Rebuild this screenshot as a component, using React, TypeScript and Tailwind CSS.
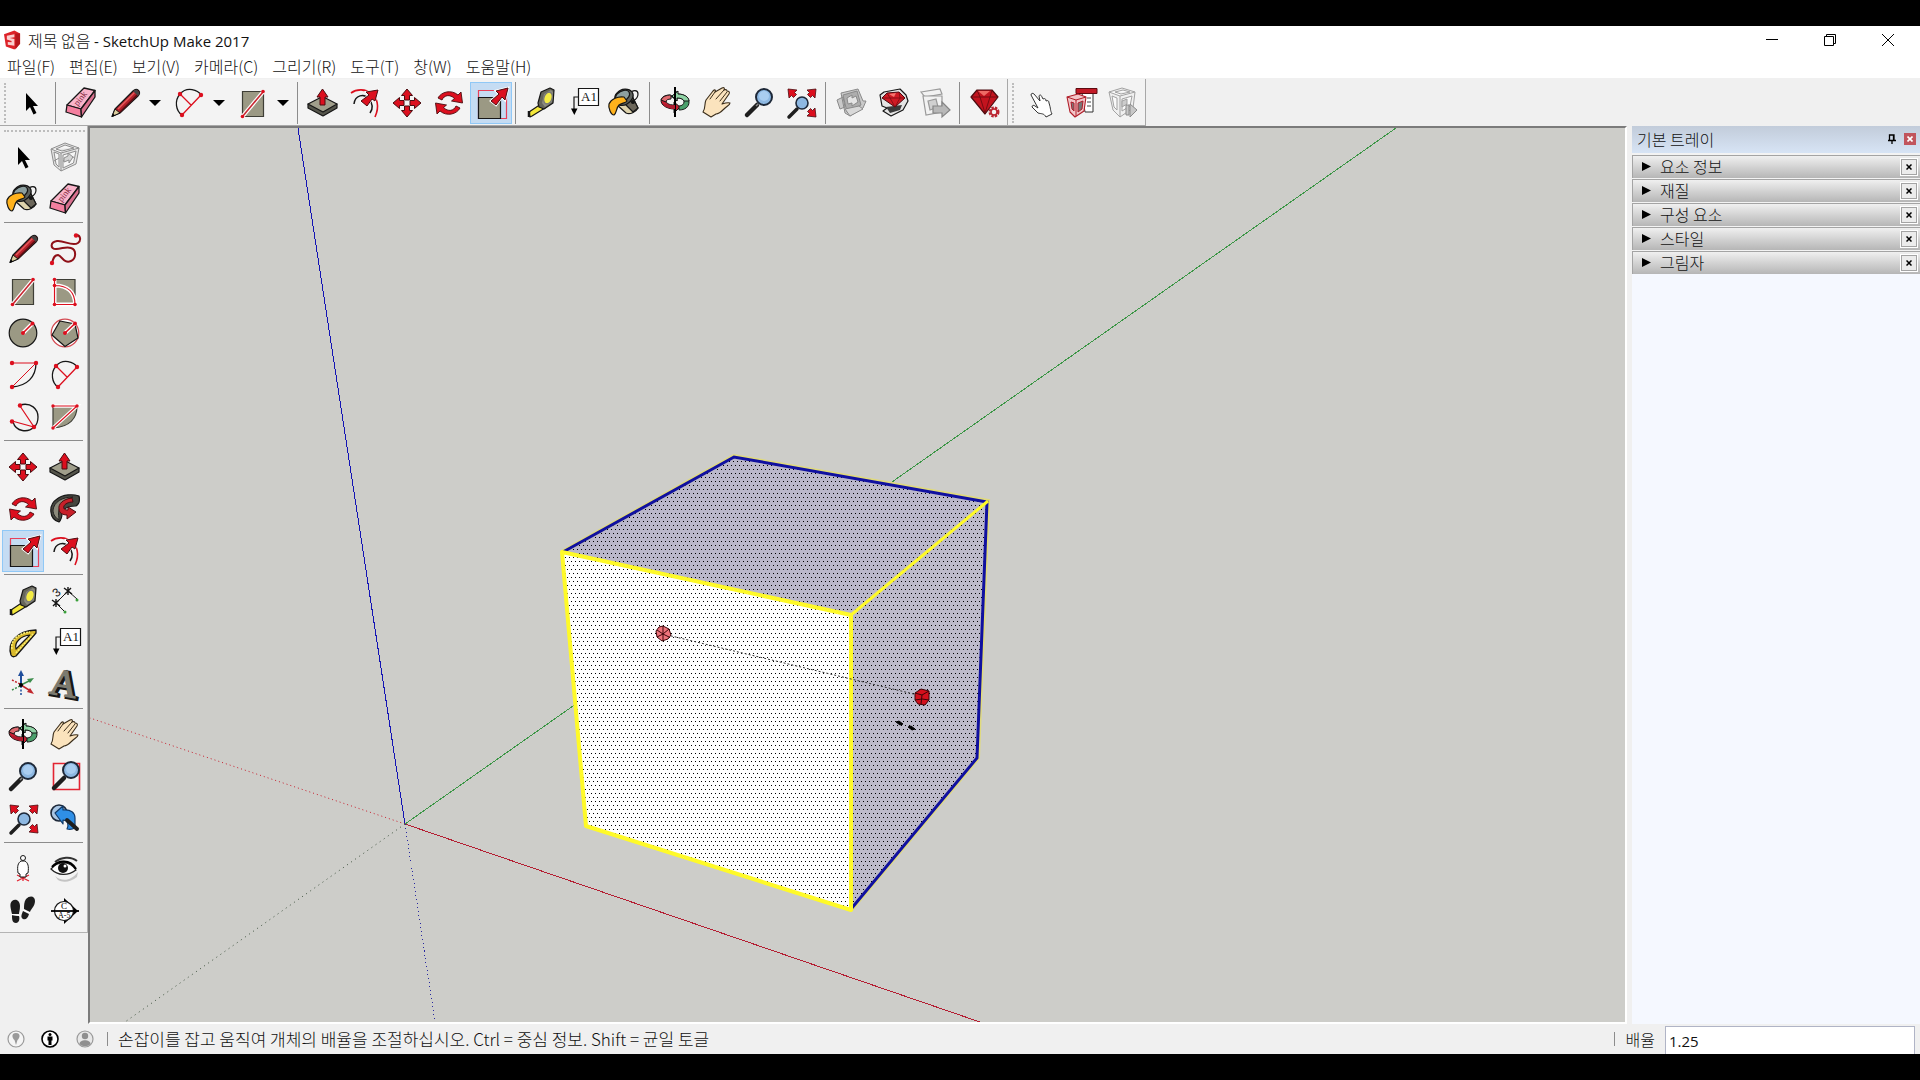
import type { ReactNode } from "react";

const RED = "#dc0f1e";
const OLIVE = "#9b9984";
const INK = "#161616";

// All tool icons share a 32x32 box
const icons: Record<string, ReactNode> = {
  select: <path d="M11 6v18l4-4 3.500 7.500 3-1.500-3.500-7h5z" fill="#000" />,
  component: (
    <g fill="none" stroke="#8e8e8e" strokeWidth="1" strokeLinejoin="round">
      <path d="M2 8 16 2l14 5-3 16-15 7L5 24z" fill="#e4e4e4" />
      <path d="M2 8l10 4 18-5M12 12v18M5 11l5 2v13l-3-3zM14 14l13-4-2.500 12L14 27zM7 8l9-4 9 3-12 3z" fill="#f6f6f6" />
      <path d="M5 20l5-3M14 20l11-4" />
      <path d="M15 17l4-2v-3l5 4-4 6v-3l-5 2z" fill="#d4d4d4" />
    </g>
  ),
  bucket: (
    <g stroke={INK} strokeWidth="1.200" strokeLinejoin="round">
      <path d="M20 7c4-5 9-4 9 0s-3 6-5 7" fill="none" />
      <path d="M7 9l16 0 6 12c-2 4-8 7-12 5L7 17z" fill="#ddd2ac" />
      <path d="M15 16l9-5 5 10-5 4z" fill="#6c675b" />
      <path d="M8 6c4-5 12-5 15-1s0 9-5 12S7 18 6 14s0-6 2-8z" fill="#5e625e" />
      <path d="M8 7c4-4 10-5 12-2s-1 7-5 9-7 1-8-1 0-5 1-6z" fill="#8da0a0" />
      <path d="M15 10C9 9 2 12 0 17c-1 4 2 11 5 11 3-2 2-7 5-10 3-2 7-2 8-4z" fill="#ffb21c" />
      <circle cx="24" cy="15" r="1.500" fill="#161616" />
    </g>
  ),
  eraser: (
    <g stroke={INK} strokeWidth="1.300" strokeLinejoin="round">
      <path d="M19 1 2 18l14 4L30 3.500z" fill="#f9b4ca" />
      <path d="M2 18l14 4 .5 8L1 25z" fill="#f47f9f" />
      <path d="M16 22 30 3.500V10L16.500 30z" fill="#d9718f" />
      <text
        x="10"
        y="18"
        fontSize="9"
        fontFamily="Liberation Serif, serif"
        fill="#7c1c38"
        stroke="none"
        transform="rotate(-52 13 16)"
      >
        pink
      </text>
    </g>
  ),
  pencil: (
    <g strokeLinejoin="round">
      <path d="M3 29.500 6 22l18-18c2-2 4-2 5.500-.5S31 7 29 9L11 26z" fill="#b3202a" stroke={INK} strokeWidth="1.200" />
      <path d="M9 22 25.500 5.500" stroke="#e55a5a" strokeWidth="1.500" />
      <path d="M11 25 28 8" stroke="#5e0d12" strokeWidth="1.500" />
      <path d="M3 29.500 6 22l5 4z" fill="#dccd9e" stroke={INK} />
      <path d="m24 4 5 5 1.500-3-3-3.500z" fill="#444" />
      <path d="m3 29.500 1-3 2 2z" fill="#000" />
    </g>
  ),
  freehand: (
    <g>
      <path
        d="M28 2c4 1 4 6 1 8-6 4-14-3-21-2-7 1-7 8-1 8 6 0 10-3 15-1 6 2 5 11 0 13-7 3-9-5-13-6-4 0-5 4-6 8"
        fill="none"
        stroke="#8f1018"
        strokeWidth="2"
      />
      <circle cx="27" cy="2.500" r="2.200" fill={RED} />
      <circle cx="3" cy="30" r="2.200" fill={RED} />
    </g>
  ),
  rectangle: (
    <g>
      <path d="M5.500 4.500h21v25h-21z" fill={OLIVE} stroke="#3e3e36" strokeWidth="1.200" />
      <path d="M5.500 29.500 26 5" stroke="#fff" strokeWidth="4" />
      <path d="M5.500 29.500 26 5" stroke="#c82832" strokeWidth="1.600" />
      <circle cx="5.500" cy="29.500" r="1.800" fill={RED} />
      <circle cx="26" cy="4.500" r="1.800" fill={RED} />
    </g>
  ),
  rotatedRectangle: (
    <g>
      <path d="M6.500 4.500h19.500v25H5.500z" fill={OLIVE} stroke="#3e3e36" strokeWidth="1.200" />
      <path d="M5.500 4.500v25h20.500c0-12-7-19-20.500-19" fill="none" stroke="#fff" strokeWidth="4" />
      <path d="M5.500 4.500v25h20.500c0-12-7-19-20.500-19" fill="none" stroke={RED} strokeWidth="1.200" />
      <g fill={RED}>
        <circle cx="5.500" cy="4.500" r="1.800" />
        <circle cx="5.500" cy="10.500" r="1.800" />
        <circle cx="5.500" cy="29.500" r="1.800" />
        <circle cx="26" cy="29.500" r="1.800" />
      </g>
    </g>
  ),
  circle: (
    <g>
      <circle cx="16" cy="16" r="13.800" fill={OLIVE} stroke={INK} strokeWidth="1.200" />
      <path d="m16 16 9.500-9.500" stroke="#fff" strokeWidth="4" />
      <path d="m16 16 9.500-9.500" stroke={RED} strokeWidth="1.600" />
      <circle cx="16" cy="16" r="2" fill={RED} />
      <circle cx="25.500" cy="6.500" r="2" fill={RED} />
    </g>
  ),
  polygon: (
    <g>
      <circle cx="16" cy="16" r="13.800" fill="#fff" stroke="#d44a52" strokeWidth="1.200" />
      <path d="M11 4 26 7l3 14-13 8.500L3 18z" fill={OLIVE} stroke={INK} strokeWidth="1.200" />
      <path d="m16 16 10-9.500" stroke="#fff" strokeWidth="4" />
      <path d="m16 16 10-9.500" stroke={RED} strokeWidth="1.600" />
      <circle cx="16" cy="16" r="2" fill={RED} />
      <circle cx="26" cy="6.500" r="2" fill={RED} />
    </g>
  ),
  arc: (
    <g fill="none">
      <path d="M29 4C29 18 20 27 5 28" stroke={INK} strokeWidth="1.300" />
      <path d="M5 4h24L5 28" stroke={RED} strokeWidth="1" />
      <g fill={RED}>
        <circle cx="5" cy="4" r="2.200" />
        <circle cx="29" cy="4" r="2.200" />
        <circle cx="5" cy="28" r="2.200" />
      </g>
    </g>
  ),
  twoPointArc: (
    <g fill="none">
      <path d="M9 28C3 24 1 14 7 7c7-8 18-4 21 1" stroke={INK} strokeWidth="1.300" />
      <path d="M7 7l11 11M9 28 28 8" stroke={RED} strokeWidth="1.300" />
      <g fill={RED}>
        <circle cx="7" cy="7" r="2.200" />
        <circle cx="28" cy="8" r="2.200" />
        <circle cx="9" cy="28" r="2.200" />
      </g>
    </g>
  ),
  threePointArc: (
    <g fill="none">
      <path d="M13 4C24 1 31 8 31 16c0 7-4 10-4 10-6 6-18 5-21-5" stroke={INK} strokeWidth="1.300" />
      <path d="M13 5l14 21-22-6" stroke={RED} strokeWidth="1.200" />
      <g fill={RED}>
        <circle cx="13" cy="4.500" r="2.200" />
        <circle cx="27" cy="26" r="2.200" />
        <circle cx="5" cy="20.500" r="2.200" />
      </g>
    </g>
  ),
  pie: (
    <g>
      <path d="M4 5h24c0 12-7 21-24 22z" fill={OLIVE} stroke="#3e3e36" strokeWidth="1.200" />
      <path d="M4 5h24L4 27" fill="none" stroke="#fff" strokeWidth="3.500" />
      <path d="M4 5h24L4 27" fill="none" stroke={RED} strokeWidth="1.100" />
      <g fill={RED}>
        <circle cx="4" cy="5" r="1.700" />
        <circle cx="28" cy="5" r="1.700" />
        <circle cx="4" cy="27" r="1.700" />
      </g>
    </g>
  ),
  move: (
    <path
      d="M16 2l5.500 6.500h-3V13h-5V8.500h-3zM16 30l5.500-6.500h-3V19h-5v4.500h-3zM2 16l6.500-5.500v3H13v5H8.500v3zM30 16l-6.500-5.500v3H19v5h4.500v3z"
      fill={RED}
      stroke="#4a0c10"
      strokeWidth="1"
    />
  ),
  pushPull: (
    <g strokeLinejoin="round">
      <path d="M1 17v4l15 8 14-8v-4z" fill="#55554b" stroke={INK} strokeWidth="1.200" />
      <path d="M1 17 15.500 9.500 30 17l-14 8z" fill="#a09e8b" stroke={INK} strokeWidth="1.200" />
      <path d="m15.500 2 5.500 8h-3v8h-5v-8h-3z" fill={RED} stroke="#4a0c10" />
    </g>
  ),
  rotate: (
    <g fill={RED} stroke="#4a0c10" strokeWidth=".9" strokeLinejoin="round">
      <path d="M5 11C8 5 18 2 25 8l3-3 1.500 11-11-2 3-2.500C17 7 11 8 9 13z" />
      <path d="M27 21c-3 6-13 9-20 3l-3 3-1.500-11 11 2-3 2.500C15 25 21 24 23 19z" />
    </g>
  ),
  followMe: (
    <g strokeLinejoin="round">
      <path d="M10 29C0 26-1 12 8 6 14 1 24 1 30 3c1 4 0 8-3 10-4 0-13 1-14 7 0 4-1 7-3 9z" fill="#46463f" stroke={INK} strokeWidth="1.200" />
      <path d="M4 17c1-8 9-13 20-13-7 2-13 7-14 13-1 4 0 7 0 10-3-2-6-5-6-10z" fill="#8b8a7b" stroke="#222" />
      <path d="M23 5c-9 1-14 6-13 11 0 4 4 6 8 6v4l9-7-8-5v3c-3 0-5-1-4-4 1-2 4-4 9-4z" fill="#c8202a" stroke="#4a0c10" />
    </g>
  ),
  scale: (
    <g>
      <path d="M3.500 3.500h28v28h-28z" fill="none" stroke="#e8415a" strokeWidth="1.200" />
      <path d="M3.500 10.500h22v21h-22z" fill={OLIVE} stroke={INK} strokeWidth="1.200" />
      <path d="M16 14l8-7-3-3 12-3-3 12-3-3-6 8z" fill={RED} stroke="#fff" strokeWidth="2.500" />
      <path d="M16 14l8-7-3-3 12-3-3 12-3-3-6 8z" fill={RED} stroke="#4a0c10" strokeWidth="1" />
    </g>
  ),
  offset: (
    <g fill="none">
      <path d="M2 6C14-3 36 8 26 30" stroke={RED} strokeWidth="1.600" />
      <path d="M5 17c1-9 10-11 15-5 4 5 4 10 1 14" stroke={INK} strokeWidth="1.500" />
      <path d="M12 14l8-6-3-3 12-2-3 11-3-2-5 7z" fill={RED} stroke="#fff" strokeWidth="2" />
      <path d="M12 14l8-6-3-3 12-2-3 11-3-2-5 7z" fill={RED} stroke="#4a0c10" />
    </g>
  ),
  tape: (
    <g stroke={INK} strokeWidth="1.200" strokeLinejoin="round">
      <path d="M4 25 16 17l4 4L7 29l-2 1z" fill="#f4e83a" />
      <path d="M4 24v6" strokeWidth="2.500" />
      <path d="M13 16 16 5l9-4 4 2-1 13-9 6-5-2z" fill="#66665c" />
      <path d="M17 16l2-9 7-4 2 2-1 10-7 5z" fill="#8e8d80" stroke="none" />
      <ellipse cx="23" cy="11" rx="4" ry="6" fill="#f4ec44" stroke="#777" transform="rotate(20 23 11)" />
    </g>
  ),
  dimension: (
    <g stroke={INK} strokeWidth="1">
      <path d="M7 18 19 6M7 18l9 9M19 6l9 8" />
      <path d="m3 15 8 6M4 21l6-6M7 14v8M15 3l8 6M16 9l6-6M19 2v8" strokeWidth="1.400" />
      <circle cx="16" cy="27" r="1.500" fill="#3aa03a" stroke="none" />
      <circle cx="28" cy="15" r="1.500" fill="#3aa03a" stroke="none" />
      <text x="4" y="11" fontSize="12" fontFamily="Liberation Sans, sans-serif" fill={INK} stroke="none" transform="rotate(-40 8 7)">
        3
      </text>
    </g>
  ),
  protractor: (
    <g strokeLinejoin="round">
      <path d="M4 28C0 16 9 4 29 3v3L9 29c-2 1-4 1-5-1z" fill="#d9b92c" stroke={INK} strokeWidth="1.300" />
      <path d="M9 22C7 15 14 9 23 8z" fill="#f3f3f3" stroke={INK} strokeWidth="1.200" />
      <path d="M5 22C3 13 12 6 23 5M9 26 26 7" stroke="#f8ee77" strokeWidth="1.600" fill="none" strokeDasharray="2 1" />
    </g>
  ),
  text: (
    <g>
      <path d="M11.500 1.500h20v17h-20z" fill="#fff" stroke={INK} strokeWidth="1.200" />
      <text x="14" y="14" fontSize="13" fontFamily="Liberation Serif, serif" fill={INK}>
        A1
      </text>
      <path d="M11 10H7v13" fill="none" stroke={INK} strokeWidth="1.200" />
      <path d="M4 21.500h6.500L7.300 28z" fill="#000" />
    </g>
  ),
  axes: (
    <g fill="none" strokeWidth="1.500">
      <path d="M14 16V5" stroke="#1f4e9c" strokeWidth="2" />
      <path d="m14 1 3 6h-6z" fill="#1f4e9c" />
      <path d="m14 16 8-4" stroke="#3b8d4b" />
      <path d="m27 9-7 1 3 4z" fill="#3b8d4b" />
      <path d="m14 16 8 5" stroke="#c1272d" />
      <path d="m27 25-7-2 3-4z" fill="#c1272d" />
      <path d="M14 17v10" stroke="#1f4e9c" strokeDasharray="2 1.500" />
      <path d="m13 17-8 4" stroke="#3b8d4b" strokeDasharray="2 1.500" />
      <path d="m13 15-8-4" stroke="#c1272d" strokeDasharray="2 1.500" />
      <circle cx="14" cy="16" r="2" fill="#000" />
    </g>
  ),
  text3d: (
    <g fontFamily="Liberation Serif, serif" fontSize="38" transform="rotate(10 16 16)">
      <text x="3" y="28" fill="#3d3d37" stroke={INK} strokeWidth="3.500">
        A
      </text>
      <text x="1" y="27" fill="#7c7b70" stroke="#7c7b70" strokeWidth="1.200">
        A
      </text>
    </g>
  ),
  orbit: (
    <g strokeLinejoin="round" stroke={INK} strokeWidth="1">
      <path d="M11 8C2 8 0 14 4 18c3 3 8 4 11 4v4l6-6-6-5v3c-5 0-8-2-8-4s2-3 5-3z" fill="#c41f32" />
      <path d="M2 13c1-3 5-5 10-5v4c-3 0-5 1-5 3z" fill="#e06a70" />
      <path d="M18 4v3l-6 2 6 5v-3c5 0 7 2 7 4s-2 4-5 4v4c6 0 10-3 10-8s-5-8-12-8z" fill="#4ba06c" />
      <path d="M13 9l6-5v3c6 0 11 3 11 7h-5c-1-2-3-3-7-3v3z" fill="#8fd3a5" />
      <path d="M16 0v30" stroke="#000" strokeWidth="2" />
      <path d="M7 17c2 1 5 2 9 1v4c-5 0-9-2-12-4z" fill="#b01b2e" stroke="none" />
    </g>
  ),
  pan: (
    <g strokeLinejoin="round" strokeLinecap="round">
      <path
        d="M2 25c3-4 1-8 3-12l7-9c2-2 3-1 2 1l7-4c2-1 3 0 2 2 2-1 3 0 3 1 2 0 3 1 2 3l-7 10c3-1 6-2 8-1 0 2-3 3-6 6-3 3-5 5-8 5l-5 3z"
        fill="#fbe3bd"
        stroke="#3a2d1b"
        strokeWidth="1.100"
      />
      <path d="m14 5-5 7M23 3l-8 9M26 5l-7 9" stroke="#3a2d1b" strokeWidth="1" />
    </g>
  ),
  zoom: (
    <g>
      <path d="M4 28 14 18" stroke="#1e1e1e" strokeWidth="4.500" strokeLinecap="round" />
      <path d="m13 19 3-3" stroke="#888" strokeWidth="1.500" />
      <circle cx="21" cy="10" r="8" fill="#8db8e2" stroke="#1d2838" strokeWidth="2" />
      <circle cx="21" cy="9" r="5" fill="#a9cdf0" />
    </g>
  ),
  zoomWindow: (
    <g>
      <path d="M4.500 2.500h26v26h-26z" fill="none" stroke="#e32432" strokeWidth="1.600" />
      <path d="M5 27 15 17" stroke="#1e1e1e" strokeWidth="4.500" strokeLinecap="round" />
      <circle cx="22" cy="9" r="8" fill="#8db8e2" stroke="#1d2838" strokeWidth="2" />
      <circle cx="22" cy="8" r="5" fill="#a9cdf0" />
    </g>
  ),
  zoomExtents: (
    <g>
      <path d="m4 30 8-8" stroke="#1e1e1e" strokeWidth="3.500" strokeLinecap="round" />
      <circle cx="17" cy="16" r="6" fill="#8db8e2" stroke="#1d2838" strokeWidth="1.600" />
      <path
        d="M3 2l9 1-2.500 2.500 2 2-3 3-2-2L4 11zM31 2l-1 9-2.500-2.500-2 2-3-3 2-2L22 3zM31 30l-9-1 2.500-2.500-2-2 3-3 2 2L30 21z"
        fill={RED}
        stroke="#4a0c10"
        strokeWidth=".8"
      />
    </g>
  ),
  previous: (
    <g strokeLinejoin="round">
      <circle cx="10" cy="10" r="8" fill="#a9c6e4" stroke="#1d2838" strokeWidth="1.600" />
      <path d="M6 10 14 3v4c8-1 12 3 12 8v10c-2 1-4 2-8 1 2-4 1-9-4-9v4z" fill="#2f8fe6" stroke="#123a68" strokeWidth="1.200" />
      <path d="m18 17 10 9" stroke="#1e1e1e" strokeWidth="4" strokeLinecap="round" />
    </g>
  ),
  camera: (
    <g fill="none">
      <path d="m10 22 12 6M22 22l-12 6M16 20v8" stroke="#e32432" strokeWidth="1.300" />
      <path d="M14 8c-3 2-4 5-3 12l2 1v3h6v-3l2-1c1-7 0-10-3-12z" fill="#fff" stroke={INK} />
      <circle cx="16" cy="5" r="2.500" fill="#fff" stroke={INK} />
    </g>
  ),
  look: (
    <g fill="none">
      <path d="M6 9C12 4 22 3 28 8" stroke="#333" strokeWidth="2" />
      <path d="M6 23c7 6 16 5 23-4l-1 5c-6 5-14 6-19 3z" fill="#c4c4c4" />
      <path d="M2 16C9 8 20 7 27 17c-8 6-18 6-25-1z" fill="#fff" stroke="#222" strokeWidth="1.200" />
      <path d="M3 14C9 7 21 6 27 16" stroke="#000" strokeWidth="2.200" />
      <circle cx="14" cy="15" r="5" fill="#111" />
      <circle cx="16" cy="13" r="1.500" fill="#fff" />
    </g>
  ),
  walk: (
    <g fill="#1d1d1d">
      <path d="M5 6c4-3 8 0 8 5 0 4-1 6-1 8H5C4 14 2 9 5 6zM5 20l7 1c1 3 0 7-3 7-4 0-4-4-4-8zM19 4c4-4 9-3 9 2s-4 8-5 11l-6-3c0-4 0-7 2-10zM16 16l6 3c-1 4-3 6-6 5-3-2-1-5 0-8z" />
      <path d="m4 19.500 9 1M16 15l7 3" stroke="#fff" strokeWidth="1" />
    </g>
  ),
  section: (
    <g>
      <path d="M15 3l14 13-14 13z" fill="#000" />
      <circle cx="15" cy="16" r="9.500" fill="#fff" stroke={INK} strokeWidth="1.200" />
      <path d="M2 16h28" stroke="#000" strokeWidth="1.800" />
      <text x="12" y="14" fontSize="9" fontFamily="Liberation Serif, serif">
        C
      </text>
      <text x="9" y="23" fontSize="8" fontFamily="Liberation Serif, serif">
        A-5
      </text>
    </g>
  ),
  warehouse: (
    <g stroke="#8a8a8a" strokeWidth="1" strokeLinejoin="round" fill="#c9c9c9">
      <path d="M2 13l6-3 2 10-5 2zM6 6l17-4 5 12 3 0-3 7-13 8-5-3z" />
      <path d="M8 8l14-4 4 14-14 7z" fill="#adadad" />
      <path d="M12 11l5-3v3l4-2 2 6-6 4v-3l-4 1z" fill="#e4e4e4" />
      <path d="M10 22l14-3 4 3-13 7z" fill="#d8d8d8" />
    </g>
  ),
  gemWarehouse: (
    <g strokeLinejoin="round">
      <path d="M3 8l4-3 16-3 6 6 2 6-5 9-12 6-8-5 4-3-5-2z" fill="#e4e4e4" stroke={INK} strokeWidth="1.200" />
      <path d="M9 20l16-2-2 5-10 3z" fill="#3a3a3a" />
      <path d="M5 11l5-5 12-1 6 6-10 9z" fill="#cf1a24" stroke="#4a0c10" />
      <path d="M5 11h23M10 6l3 5 5 9 5-9-1-6" fill="none" stroke="#7c0b12" strokeWidth=".8" />
      <path d="m12 7 7-1-2 4z" fill="#f7766f" />
    </g>
  ),
  share: (
    <g stroke="#9a9a9a" strokeWidth="1.200" fill="#f2f2f2">
      <path d="M2 5 21 2l2 5-17 3z" />
      <path d="M4 9h19v16l-16 3z" />
      <path d="M9 14l8-2 2 8-8 3z" fill="#d0d0d0" />
      <path d="M14 19h9v-4l8 8-8 7v-4h-9z" fill="#b8b8b8" stroke="#858585" />
    </g>
  ),
  extension: (
    <g strokeLinejoin="round">
      <path d="M2 10 8 3h15l6 7-13 17z" fill="#c3131e" stroke="#4a0c10" strokeWidth="1.200" />
      <path d="M2 10h27M8 3l3 7 5 16 5-16 2-7" fill="none" stroke="#6d0a10" strokeWidth=".9" />
      <path d="m9 4 6 5 6-5z" fill="#ee6a64" />
      <circle cx="25" cy="25" r="4" fill="#f3f3f3" stroke="#bb2430" strokeWidth="3" strokeDasharray="2.200 1" />
      <circle cx="25" cy="25" r="3" fill="#f3f3f3" stroke="#bb2430" strokeWidth="1.500" />
    </g>
  ),
  point: (
    <path
      d="M7 8c0-2 2-2 3-1l6 7-1-5c1-2 2-1 3 1l1 2c2-1 3 0 3 2 2-1 3 0 3 2 2 6 1 7 3 11l-6 3c-2-4-5-3-8-4l-6-6c0-2 2-2 3-1l3 2z"
      fill="#fff"
      stroke="#333"
      strokeWidth="1"
      strokeLinejoin="round"
    />
  ),
  componentOptions: (
    <g strokeLinejoin="round">
      <path d="M16 6h11v19h-8z" fill="#fff" stroke="#333" />
      <path d="M10 1.500h21v5H10z" fill="#c21a26" stroke="#5d0b10" />
      <path d="M21 11h4M21 15h4M21 19h4" stroke="#444" />
      <path d="M1 10l11-3 8 3-2 14-9 6-5-5z" fill="#f2c5c8" stroke="#b01c28" strokeWidth="1.100" />
      <path d="M1 10l9 3 10-3M10 13v16" fill="none" stroke="#b01c28" />
      <path d="M5 15l3 1v8l-2-2zM12 16l5-2-1 8-4 3z" fill="#777" stroke="#b01c28" />
    </g>
  ),
  componentAttributes: (
    <g stroke="#a2a2a2" fill="#f0f0f0" strokeLinejoin="round">
      <path d="M1 5 14 1l13 4-2 16-13 9-7-7z" />
      <path d="M1 5l11 4 15-4M12 9v21M4 9l5 2v12l-3-3zM14 12l10-3-2 10-8 5zM7 5l8-2 7 2-9 2z" fill="#fafafa" />
      <path d="M14 14l5-2v5l-5 3z" fill="#ccc" />
      <path d="M18 18h3v10h-3zM22 17l7 6-7 7z" fill="#c8c8c8" stroke="#8a8a8a" />
    </g>
  ),
};

const Icon = ({ name }: { name: string }) => (
  <svg viewBox="0 0 32 32" className="size-8 shrink-0 overflow-visible" aria-hidden="true">
    {icons[name]}
  </svg>
);

const ToolButton = ({ name, active }: { name: string; active?: boolean }) => (
  <button
    type="button"
    aria-label={name}
    aria-pressed={!!active}
    className={
      active
        ? "flex h-[42px] w-[42px] items-center justify-center border border-[#90c8f6] bg-[#c5dcf3]"
        : "flex h-[42px] w-[42px] items-center justify-center"
    }
  >
    <Icon name={name} />
  </button>
);

const ToolWithMenu = ({ name }: { name: string }) => (
  <div className="flex h-[42px] items-center">
    <button type="button" aria-label={name} className="flex w-[46px] justify-center">
      <Icon name={name} />
    </button>
    <button type="button" aria-label={`${name} menu`} className="flex w-[18px] pl-px">
      <svg viewBox="0 0 12 8" className="h-2 w-3">
        <path d="M0 1h12L6 7z" fill="#000" />
      </svg>
    </button>
  </div>
);

const Separator = () => <div className="mr-1 ml-[3px] h-[42px] w-px bg-[#8c8c8c]" />;

const TopToolbar = () => (
  <div className="flex h-12 bg-[#f0f0f0] pt-px">
    <div className="flex items-center border-r border-b border-[#a8a8a8] bg-[#f3f3f3] pt-0.5 pr-px pl-1">
      <div className="mr-1 h-10 border-l-2 border-dotted border-[#bdbdbd]" />
      <ToolButton name="select" />
      <Separator />
      <ToolButton name="eraser" />
      <ToolWithMenu name="pencil" />
      <ToolWithMenu name="twoPointArc" />
      <ToolWithMenu name="rectangle" />
      <Separator />
      {["pushPull", "offset", "move", "rotate"].map((name) => (
        <ToolButton key={name} name={name} />
      ))}
      <ToolButton name="scale" active />
      <Separator />
      {["tape", "text", "bucket"].map((name) => (
        <ToolButton key={name} name={name} />
      ))}
      <Separator />
      {["orbit", "pan", "zoom", "zoomExtents"].map((name) => (
        <ToolButton key={name} name={name} />
      ))}
      <Separator />
      {["warehouse", "gemWarehouse", "share"].map((name) => (
        <ToolButton key={name} name={name} />
      ))}
      <Separator />
      <ToolButton name="extension" />
    </div>
    <div className="flex items-center border-r border-b border-[#a8a8a8] bg-[#f3f3f3] pt-0.5 pl-1">
      <div className="mr-[5px] h-10 border-l-2 border-dotted border-[#bdbdbd]" />
      {["point", "componentOptions", "componentAttributes"].map((name) => (
        <ToolButton key={name} name={name} />
      ))}
    </div>
  </div>
);

const toolGroups = [
  ["select", "component", "bucket", "eraser"],
  [
    "pencil",
    "freehand",
    "rectangle",
    "rotatedRectangle",
    "circle",
    "polygon",
    "arc",
    "twoPointArc",
    "threePointArc",
    "pie",
  ],
  ["move", "pushPull", "rotate", "followMe", "scale", "offset"],
  ["tape", "dimension", "protractor", "text", "axes", "text3d"],
  ["orbit", "pan", "zoom", "zoomWindow", "zoomExtents", "previous"],
  ["camera", "look", "walk", "section"],
];

const SideToolbar = () => (
  <aside className="w-[88px] shrink-0 bg-[#f0f0f0]">
    <div className="border-r border-b border-[#b4b4b4] bg-[#f3f3f3] pt-1 pl-0.5">
      <div className="mx-0.5 mb-1 border-t-2 border-dotted border-[#bdbdbd]" />
      {toolGroups.map((group, i) => (
        <div key={i}>
          {i > 0 && <div className="mr-1 mt-0.5 mb-[5px] ml-0.5 h-px bg-[#8c8c8c]" />}
          <div className="grid grid-cols-[42px_42px]">
            {group.map((name) => (
              <ToolButton key={name} name={name} active={name === "scale"} />
            ))}
          </div>
        </div>
      ))}
    </div>
  </aside>
);

const Viewport = () => (
  <main className="min-w-0 flex-1 overflow-hidden border-2 border-t-[#7b7b7b] border-r-white border-b-white border-l-[#7b7b7b] bg-[#cdcdc9]">
    <svg className="block h-full w-full" role="img" aria-label="3D model">
      <defs>
        <pattern id="dots" width="4" height="8" patternUnits="userSpaceOnUse">
          <path d="M3 1h1v1H3zM1 5h1v1H1z" fill="#000" shapeRendering="crispEdges" />
        </pattern>
      </defs>
      <g transform="translate(-90 -128)" fill="none">
        <g shapeRendering="crispEdges">
          <path d="M298 128 405 824" stroke="#1414b4" />
          <path d="M405 824 1396 128" stroke="#3c9646" />
          <path d="M405 824 980 1022" stroke="#b41e32" />
          <path d="M405 824 435 1022" stroke="#2828a0" strokeDasharray="1 3" />
        </g>
        <path d="M405 824 90 718" stroke="#c81e2d" strokeDasharray="1 3" />
        <path d="M405 824 125 1022" stroke="#3c503c" strokeDasharray="1 4" />

        <path d="M562 552 734 456 988 501 851 615z" fill="#bab7ca" />
        <path d="M851 615 988 501 978 758 851 910z" fill="#bdbaca" />
        <path d="M562 552 851 615V910L586 826z" fill="#fff" />
        <path d="M562 552 734 456 988 501 978 758 851 910 586 826z" fill="url(#dots)" />

        <path d="M562 552 734 456 988 501 978 758 851 910" stroke="#e0da7c" strokeWidth="4" />
        <path d="M563 552 734 457 987 502 977 758 851 909" stroke="#1010a0" strokeWidth="3" />
        <path d="M562 552 851 615V910L586 826z" stroke="#fffa28" strokeWidth="4" strokeLinejoin="round" />
        <path d="M851 615 988 501" stroke="#fffa28" strokeWidth="3" />

        <path d="M663 634 922 696" stroke="#333" strokeDasharray="2 2" />
        <g stroke="#3c0508" strokeWidth="1">
          <path d="m663 626 6 3 2 6-3 4-6 2-5-4-1-6 3-4z" fill="#ef747c" />
          <path d="M663 626v15M657 637l6-3 6 3M657 630l6 4 6-5" />
          <path d="m915 693 6-4 8 2v9l-4 5-7-1-3-4z" fill="#d40f1c" />
          <path d="m915 693 7 2 7-4M922 695l-1 9M915 700l7-1 7 1" />
        </g>
        <path d="m896 722 3-1 4 3-3 1zM908 727l3-1 4 3-3 1z" fill="#000" stroke="#000" />
      </g>
    </svg>
  </main>
);

const trays = ["요소 정보", "재질", "구성 요소", "스타일", "그림자"];

const Tray = () => (
  <aside className="flex w-72 shrink-0 flex-col bg-[#f5f8ff]">
    <header className="flex h-[27px] items-center bg-linear-to-b from-[#c2ccda] to-[#d7e4f5] pr-1 pb-px pl-[5px]">
      <h2 className="flex-1 pb-px text-base leading-6 font-light">기본 트레이</h2>
      <button type="button" aria-label="자동 숨기기" className="mr-2">
        <svg viewBox="0 0 8 10" className="h-[10px] w-2">
          <path d="M1.500 6V1h4.500v5M0 6.500h8M4 7v3M5.500 1v5" fill="none" stroke="#000" strokeWidth="1.300" />
        </svg>
      </button>
      <button type="button" aria-label="닫기" className="flex size-3 items-center justify-center bg-[#c1545c]">
        <svg viewBox="0 0 6 6" className="size-1.5">
          <path d="m.5.500 5 5m0-5-5 5" stroke="#fff" strokeWidth="1.600" />
        </svg>
      </button>
    </header>
    <div className="flex flex-col gap-px bg-[#f3f3f3] pt-0.5">
      {trays.map((title) => (
        <div
          key={title}
          className="flex h-[23px] items-center border-t border-l border-[#a4a4a4] bg-linear-to-b from-[#f0f0f0] to-[#b6b6b6] pr-[3px] pb-px"
        >
          <button type="button" className="flex flex-1 items-center pb-0.5 pl-[9px] text-left text-base leading-5 font-light">
            <svg viewBox="0 0 9 9" className="mt-0.5 mr-[9px] size-[9px]">
              <path d="M0 0v9l9-4.500z" fill="#000" />
            </svg>
            {title}
          </button>
          <button
            type="button"
            aria-label={`${title} 닫기`}
            className="flex size-4 items-center justify-center border border-[#a4a4a4] bg-[#ececec] outline outline-white"
          >
            <svg viewBox="0 0 6 6" className="size-1.5">
              <path d="m.5.500 5 5m0-5-5 5" stroke="#000" strokeWidth="1.500" />
            </svg>
          </button>
        </div>
      ))}
    </div>
  </aside>
);

const TitleBar = () => (
  <header className="flex h-7 items-center bg-white pr-[3px] pl-1">
    <svg viewBox="0 0 18 20" className="h-5 w-[17px]">
      <path d="M0 4 11 0l6 3v11l-6 6-9-3z" fill="#dd2229" />
      <path d="m12 3 5 0v11l-5 6z" fill="#b5161d" />
      <path d="M3 5.500 11 4v3l-5 1 5 1v7l-7-1v-3l4 .5V11L3 9.500z" fill="#f9cfcf" />
    </svg>
    <h1 className="ml-[7px] flex-1 text-base leading-6 font-light">
      제목 없음 <span className="font-['Open_Sans',sans-serif] text-[15px] font-normal">- SketchUp Make 2017</span>
    </h1>
    <button type="button" aria-label="최소화" className="flex w-[58px] justify-center">
      <svg viewBox="0 0 12 12" className="size-3">
        <path d="M0 5.500h12" stroke="#000" />
      </svg>
    </button>
    <button type="button" aria-label="복원" className="flex w-[58px] justify-center">
      <svg viewBox="0 0 12 12" className="size-3">
        <path d="M.5 2.500h9v9h-9zM2.500 2.500v-2h9v9h-2" fill="none" stroke="#000" />
      </svg>
    </button>
    <button type="button" aria-label="닫기" className="flex w-[58px] justify-center">
      <svg viewBox="0 0 12 12" className="size-3">
        <path d="m0 0 12 12M12 0 0 12" stroke="#000" />
      </svg>
    </button>
  </header>
);

const menus = ["파일(F)", "편집(E)", "보기(V)", "카메라(C)", "그리기(R)", "도구(T)", "창(W)", "도움말(H)"];

const MenuBar = () => (
  <nav className="flex h-6 items-center gap-[14px] bg-white pl-[7px]">
    {menus.map((menu) => (
      <button key={menu} type="button" className="text-base leading-5 font-light">
        {menu}
      </button>
    ))}
  </nav>
);

const StatusBar = () => (
  <footer className="flex h-[30px] items-center bg-[#f0f0f0] pl-[7px] text-[17px] leading-6 font-light">
    <svg viewBox="0 0 18 18" className="size-[18px]">
      <circle cx="9" cy="9" r="8" fill="#f5f5f5" stroke="#9a9a9a" strokeWidth="1.200" />
      <path d="M9 3c5 0 4 5 1.500 7L9 15l-1.500-5C5 8 4 3 9 3z" fill="#9a9a9a" />
    </svg>
    <svg viewBox="0 0 18 18" className="ml-4 size-[18px]">
      <circle cx="9" cy="9" r="8" fill="#fff" stroke="#000" strokeWidth="1.600" />
      <circle cx="9" cy="4.500" r="1.500" />
      <path d="M6.500 6.500h5v4H10.500V15h-3v-4.500h-1z" />
    </svg>
    <svg viewBox="0 0 18 18" className="ml-[17px] size-[18px]">
      <circle cx="9" cy="9" r="8" fill="#e8e8e8" stroke="#9a9a9a" strokeWidth="1.200" />
      <circle cx="9" cy="6" r="3.200" fill="#8f8f8f" />
      <path d="M3.500 14c0-5 11-5 11 0-3 3-8 3-11 0z" fill="#8f8f8f" />
    </svg>
    <div className="mr-[10px] ml-[13px] h-[14px] w-px bg-[#8c8c8c]" />
    <p className="flex-1">손잡이를 잡고 움직여 개체의 배율을 조절하십시오. Ctrl = 중심 정보. Shift = 균일 토글</p>
    <div className="mr-[11px] h-[14px] w-px bg-[#8c8c8c]" />
    <label htmlFor="scale" className="text-base">
      배율
    </label>
    <input
      id="scale"
      defaultValue="1.25"
      className="mt-0.5 mr-[5px] ml-[10px] h-7 w-[250px] border border-b-0 border-[#b0b4c6] bg-white px-[3px] font-['Open_Sans',sans-serif] text-[15px] font-normal outline-none"
    />
  </footer>
);

const App = () => {
  return (
    <div className="flex h-screen flex-col bg-black py-[26px] font-['Noto_Sans_CJK_KR',sans-serif] text-[#111]">
      <TitleBar />
      <MenuBar />
      <TopToolbar />
      <div className="flex min-h-0 flex-1 bg-[#f0f0f0]">
        <SideToolbar />
        <Viewport />
        <div className="w-[5px] shrink-0" />
        <Tray />
      </div>
      <StatusBar />
    </div>
  );
};

export default App;
